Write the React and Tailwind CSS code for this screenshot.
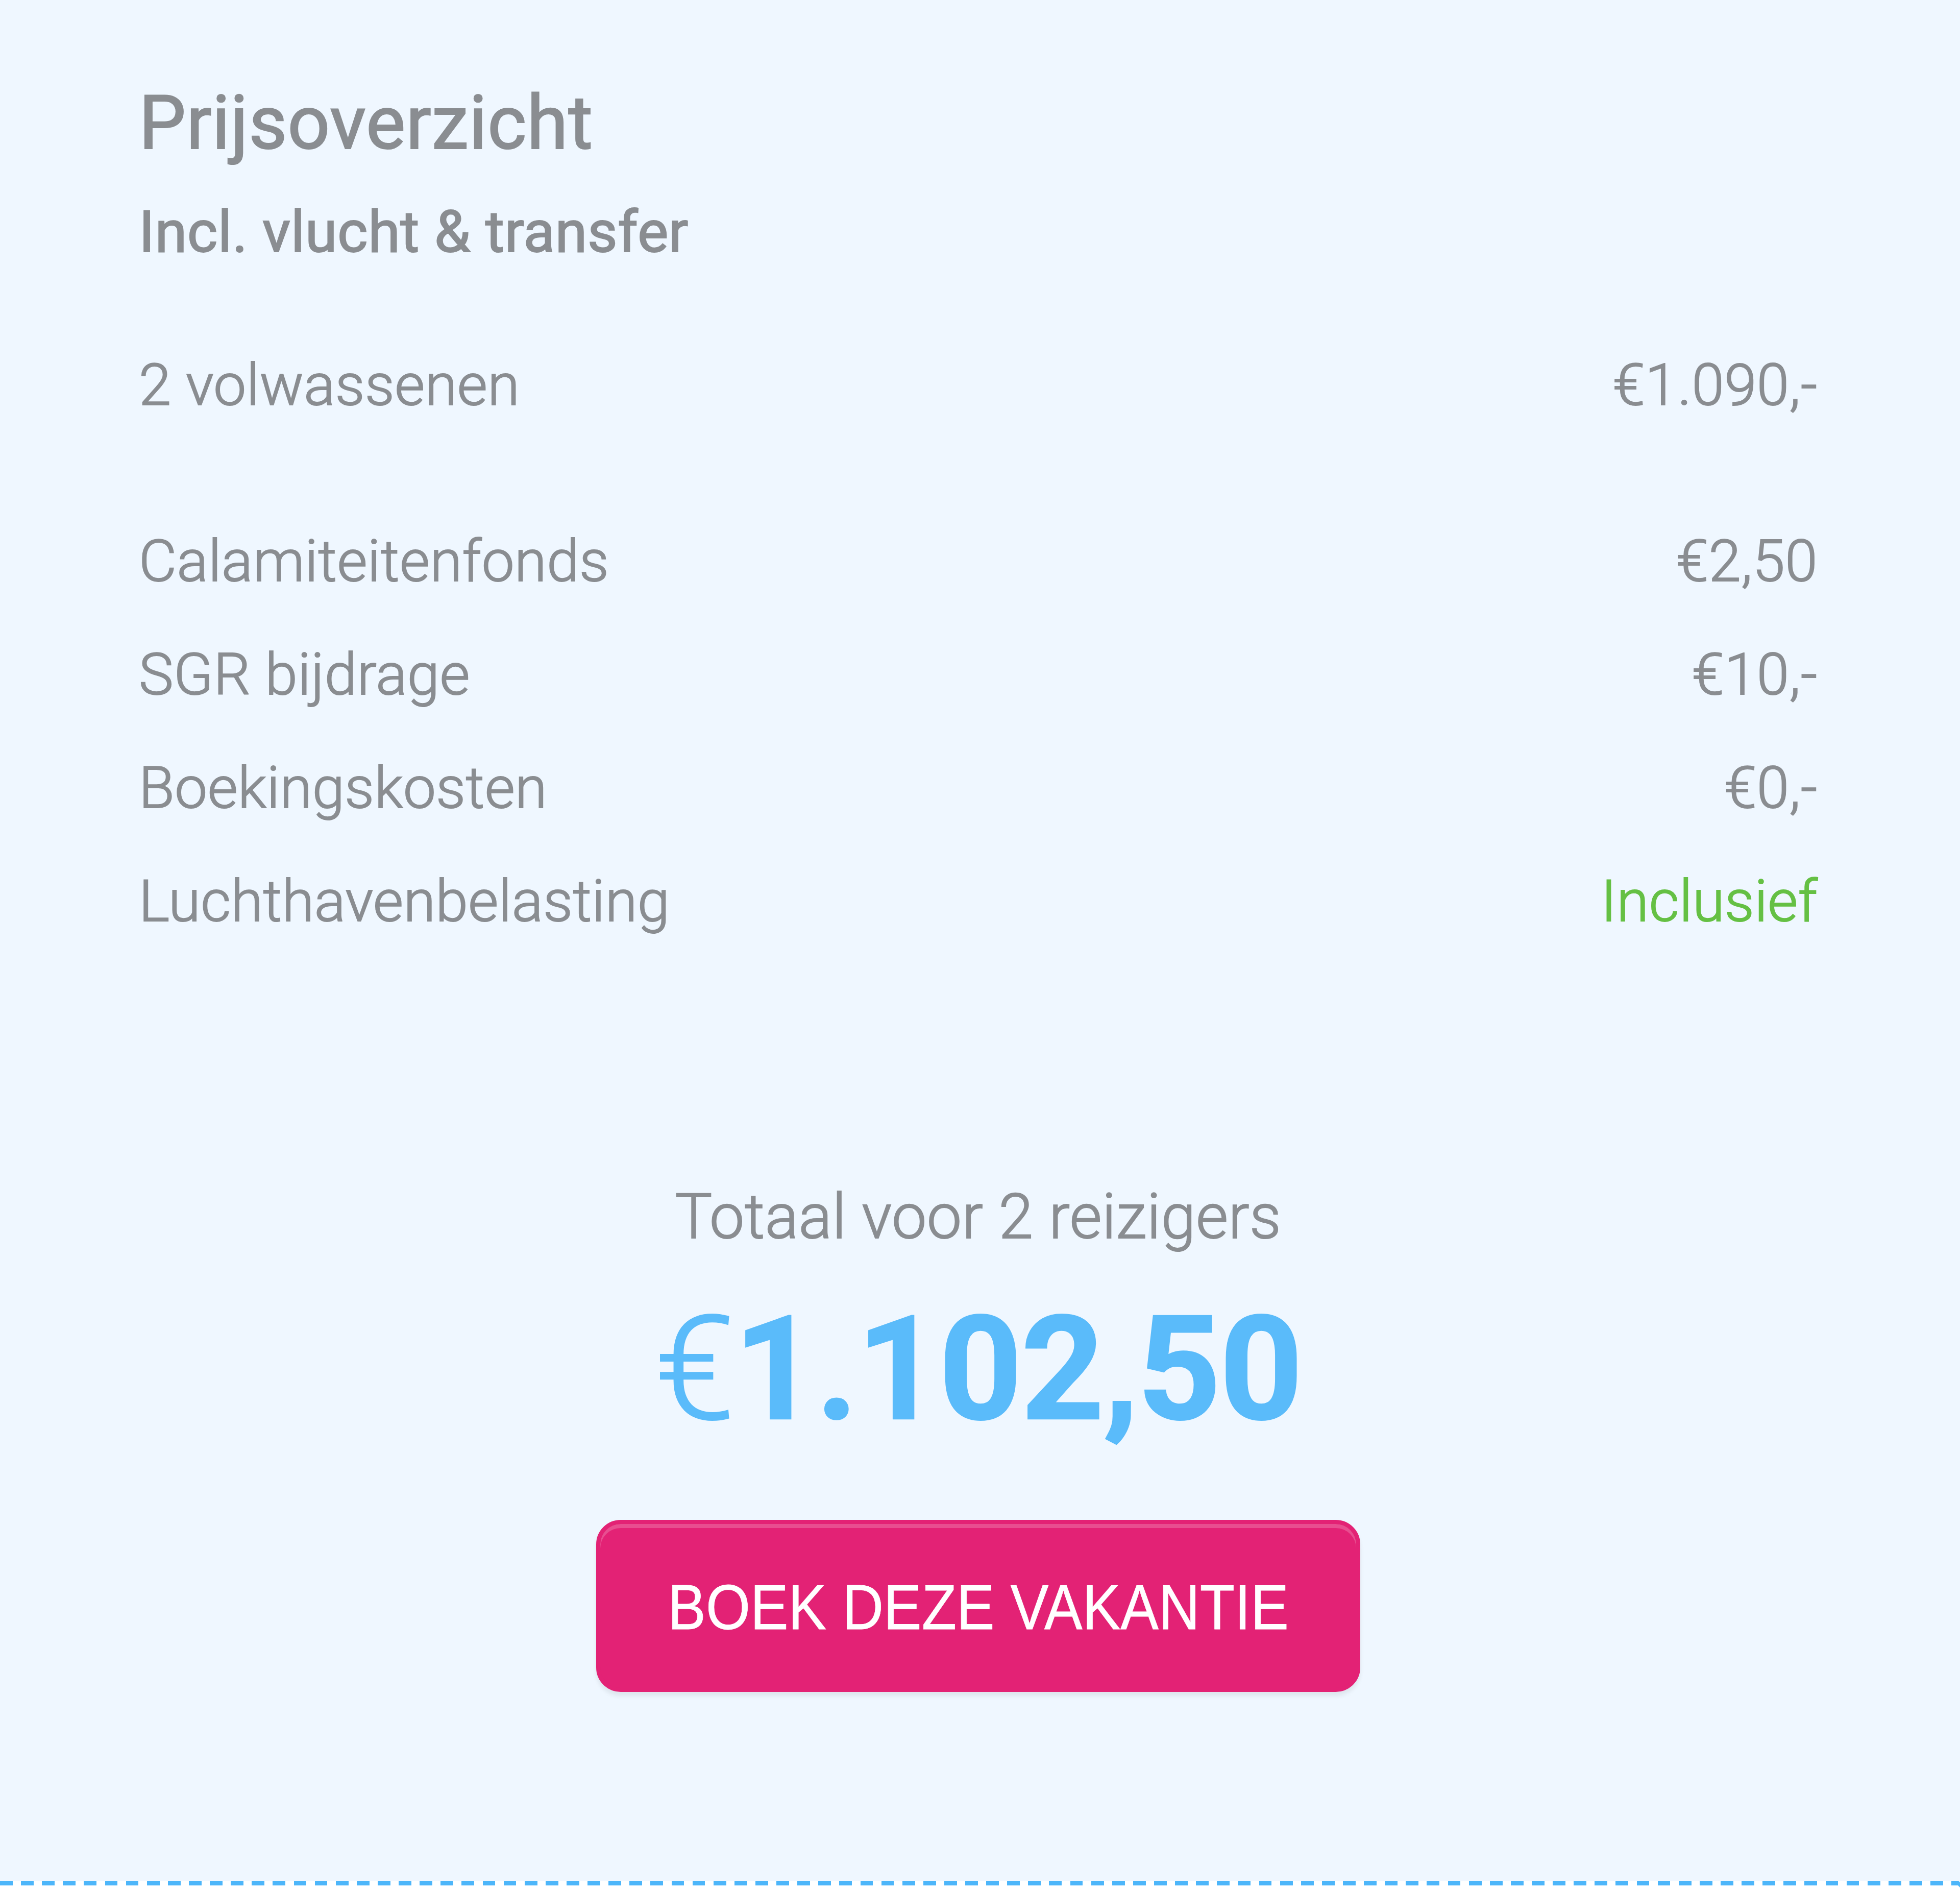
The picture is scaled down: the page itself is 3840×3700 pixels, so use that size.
const extraCosts = [
  { label: 'Calamiteitenfonds', price: '€2,50' },
  { label: 'SGR bijdrage', price: '€10,-' },
  { label: 'Boekingskosten', price: '€0,-' },
  { label: 'Luchthavenbelasting', price: 'Inclusief', included: true },
]

function App() {
  return (
    <main className="flex h-[3700px] w-[3840px] flex-col overflow-hidden bg-white font-[Roboto,sans-serif] text-[#8a8d91]">
      <section className="flex h-[3684px] flex-col bg-[#eff7ff] pt-[142px] pr-[279px] pl-[272px]">
        <h2 className="h-[200px] text-[146px] leading-[200px] font-normal tracking-[0.8px] [-webkit-text-stroke:2.2px_#8a8d91]">
          Prijsoverzicht
        </h2>
        <h3 className="mt-[12px] h-[200px] text-[114px] leading-[200px] font-normal tracking-[0.4px] [-webkit-text-stroke:2px_#8a8d91]">
          Incl. vlucht &amp; transfer
        </h3>
        <PriceRow className="mt-[89px]" label="2 volwassenen" price="€1.090,-" />
        <div className="mt-[123px]">
          {extraCosts.map((cost) => (
            <PriceRow key={cost.label} {...cost} />
          ))}
        </div>
        <div className="mt-[397px] flex flex-col items-center">
          <p className="h-[222px] text-[122px] leading-[222px] font-light tracking-[0.5px] [-webkit-text-stroke:2px_#8a8d91]">
            Totaal voor 2 reizigers
          </p>
          <p className="mt-[37px] h-[300px] text-[284px] leading-[300px] font-light tracking-[-2.2px] text-[#5abbfa] [-webkit-text-stroke:2.5px_#5abbfa]">
            €<strong className="font-bold">1.102,50</strong>
          </p>
          <button
            className="mt-[145px] h-[337px] w-[1497px] rounded-[48px] border-8 border-[#e32275] bg-[#e32275] pt-[4px] font-['Liberation_Sans',sans-serif] text-[125px] whitespace-nowrap text-white uppercase shadow-[inset_0_8px_0_rgba(255,255,255,0.2),0_8px_8px_rgba(0,0,0,0.07)]"
            type="button"
          >
            <span className="inline-block scale-x-[0.895] [-webkit-text-stroke:0.8px_white]">
              Boek deze vakantie
            </span>
          </button>
        </div>
      </section>
      <DashedEdge />
    </main>
  )
}

function PriceRow({ className = '', label, price, included = false }) {
  return (
    <div
      className={`flex h-[222px] justify-between text-[114px] leading-[222px] font-light tracking-[0.45px] [-webkit-text-stroke:2px_currentColor] ${className}`}
    >
      <span>{label}</span>
      <span className={included ? 'text-[#65c044] [-webkit-text-stroke-color:#65c044]' : ''}>
        {price}
      </span>
    </div>
  )
}

function DashedEdge() {
  return (
    <div className="flex h-[16px] items-start">
      <div className="h-[9px] w-[3836px] bg-[repeating-linear-gradient(90deg,#4db6fa_0px,#4db6fa_24.8px,white_24.8px,white_41.11px)]" />
      <svg className="h-[16px] w-[4px]" viewBox="0 0 4 16">
        <path d="M0 0h1l3 3v10l-4-4z" fill="#4db6fa" />
      </svg>
    </div>
  )
}

export default App
